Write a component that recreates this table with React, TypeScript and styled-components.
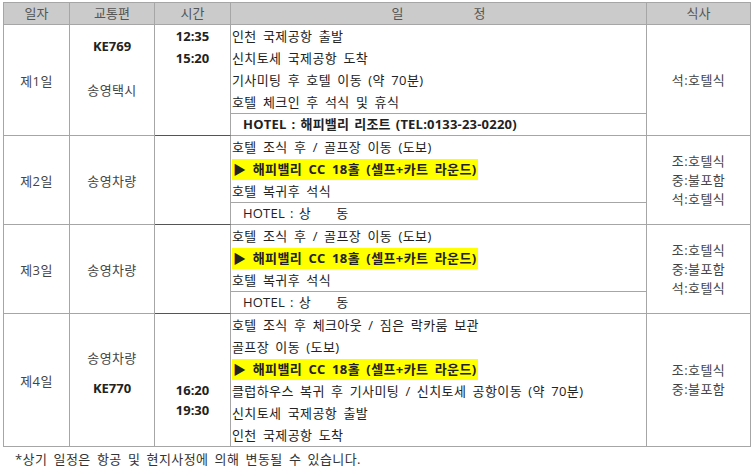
import React from 'react';
import styled, { createGlobalStyle } from 'styled-components';

const GlobalStyle = createGlobalStyle`
  html, body {
    margin: 0;
    padding: 0;
    background: #ffffff;
  }
  body {
    font-family: "Open Sans", "Noto Sans CJK KR", sans-serif;
    color: #222;
  }
`;

const Page = styled.div`
  padding: 2px 0 0 3px;
  width: 756px;
  box-sizing: border-box;
`;

const Table = styled.div`
  width: 748px;
  border-top: 1px solid #a6a6a6;
  border-left: 1px solid #a6a6a6;
  box-sizing: border-box;
`;

const Row = styled.div`
  display: grid;
  grid-template-columns: 66px 85px 76px 416px 104px;
`;

const Cell = styled.div`
  box-sizing: border-box;
  border-right: 1px solid #a6a6a6;
  border-bottom: 1px solid #a6a6a6;
  font-size: 13px;
`;

const HeadCell = styled(Cell)<{ $gap?: number }>`
  height: 22px;
  background: #cbcbcb;
  color: #555;
  display: flex;
  align-items: center;
  justify-content: center;
  gap: ${p => p.$gap ?? 0}px;
  line-height: 1;
`;

const CenterCell = styled(Cell)<{ $pad?: number; $gap?: number }>`
  display: flex;
  flex-direction: column;
  align-items: center;
  justify-content: ${p => (p.$pad !== undefined ? 'flex-start' : 'center')};
  padding-top: ${p => p.$pad ?? 0}px;
  gap: ${p => p.$gap ?? 0}px;
  color: #444;
  letter-spacing: 0.4px;
`;

const TimeCell = styled(Cell)<{ $pad?: number; $dark?: boolean }>`
  display: flex;
  flex-direction: column;
  align-items: center;
  padding-top: ${p => p.$pad ?? 0}px;
  font-weight: 700;
  line-height: ${p => (p.$pad ? 20 : 22)}px;
  ${p => p.$dark && 'margin-top: -1px; border-top: 1px solid #555;'}
`;

const Strong = styled.span`
  font-weight: 700;
  color: #222;
  letter-spacing: 0;
`;

const Plain = styled.span`
  line-height: 1.2;
`;

const ScheduleCell = styled(Cell)`
  display: flex;
  flex-direction: column;
`;

const Line = styled.div`
  height: 22px;
  line-height: 22px;
  padding-left: 1px;
  white-space: nowrap;
  color: #222;
  letter-spacing: 0.4px;
  word-spacing: 2.5px;
`;

const Highlight = styled.span`
  background: #ffff00;
  font-weight: 700;
  padding: 1px 1px 2px 1px;
`;

const HotelRow = styled.div<{ $bold?: boolean }>`
  border-top: 1px solid #a6a6a6;
  height: 21px;
  line-height: 21px;
  padding-left: 12px;
  margin-top: auto;
  font-weight: ${p => (p.$bold ? 700 : 400)};
  white-space: pre;
  color: #222;
  letter-spacing: 0.2px;
  word-spacing: 1.5px;
`;

const MealCell = styled(Cell)`
  display: flex;
  flex-direction: column;
  align-items: center;
  justify-content: center;
  line-height: 19px;
  color: #444;
  letter-spacing: 0.4px;
`;

const Note = styled.div`
  font-size: 13px;
  line-height: 18px;
  color: #333;
  padding: 3px 0 0 12px;
  letter-spacing: 0.4px;
  word-spacing: 2.5px;
`;

const GolfLine = () => (
  <Line>
    <Highlight>▶ 해피밸리 CC 18홀 (셀프+카트 라운드)</Highlight>
  </Line>
);

const App: React.FC = () => (
  <>
    <GlobalStyle />
    <Page>
      <Table>
        <Row>
          <HeadCell>일자</HeadCell>
          <HeadCell>교통편</HeadCell>
          <HeadCell>시간</HeadCell>
          <HeadCell $gap={70}>
            <span>일</span>
            <span>정</span>
          </HeadCell>
          <HeadCell>식사</HeadCell>
        </Row>

        <Row>
          <CenterCell>제1일</CenterCell>
          <CenterCell $pad={12} $gap={28}>
            <Strong>KE769</Strong>
            <Plain>송영택시</Plain>
          </CenterCell>
          <TimeCell>
            <span>12:35</span>
            <span>15:20</span>
          </TimeCell>
          <ScheduleCell>
            <Line>인천 국제공항 출발</Line>
            <Line>신치토세 국제공항 도착</Line>
            <Line>기사미팅 후 호텔 이동 (약 70분)</Line>
            <Line>호텔 체크인 후 석식 및 휴식</Line>
            <HotelRow $bold>HOTEL : 해피밸리 리조트 (TEL:0133-23-0220)</HotelRow>
          </ScheduleCell>
          <MealCell>석:호텔식</MealCell>
        </Row>

        <Row>
          <CenterCell>제2일</CenterCell>
          <CenterCell>송영차량</CenterCell>
          <TimeCell $dark />
          <ScheduleCell>
            <Line>호텔 조식 후 / 골프장 이동 (도보)</Line>
            <GolfLine />
            <Line>호텔 복귀후 석식</Line>
            <HotelRow>{'HOTEL : 상     동'}</HotelRow>
          </ScheduleCell>
          <MealCell>
            <span>조:호텔식</span>
            <span>중:불포함</span>
            <span>석:호텔식</span>
          </MealCell>
        </Row>

        <Row>
          <CenterCell>제3일</CenterCell>
          <CenterCell>송영차량</CenterCell>
          <TimeCell $dark />
          <ScheduleCell>
            <Line>호텔 조식 후 / 골프장 이동 (도보)</Line>
            <GolfLine />
            <Line>호텔 복귀후 석식</Line>
            <HotelRow>{'HOTEL : 상     동'}</HotelRow>
          </ScheduleCell>
          <MealCell>
            <span>조:호텔식</span>
            <span>중:불포함</span>
            <span>석:호텔식</span>
          </MealCell>
        </Row>

        <Row>
          <CenterCell>제4일</CenterCell>
          <CenterCell $pad={37} $gap={12}>
            <Plain>송영차량</Plain>
            <Strong>KE770</Strong>
          </CenterCell>
          <TimeCell $dark $pad={66}>
            <span>16:20</span>
            <span>19:30</span>
          </TimeCell>
          <ScheduleCell>
            <Line>호텔 조식 후 체크아웃 / 짐은 락카룸 보관</Line>
            <Line>골프장 이동 (도보)</Line>
            <GolfLine />
            <Line>클럽하우스 복귀 후 기사미팅 / 신치토세 공항이동 (약 70분)</Line>
            <Line>신치토세 국제공항 출발</Line>
            <Line>인천 국제공항 도착</Line>
          </ScheduleCell>
          <MealCell>
            <span>조:호텔식</span>
            <span>중:불포함</span>
          </MealCell>
        </Row>
      </Table>
      <Note>*상기 일정은 항공 및 현지사정에 의해 변동될 수 있습니다.</Note>
    </Page>
  </>
);

export default App;
